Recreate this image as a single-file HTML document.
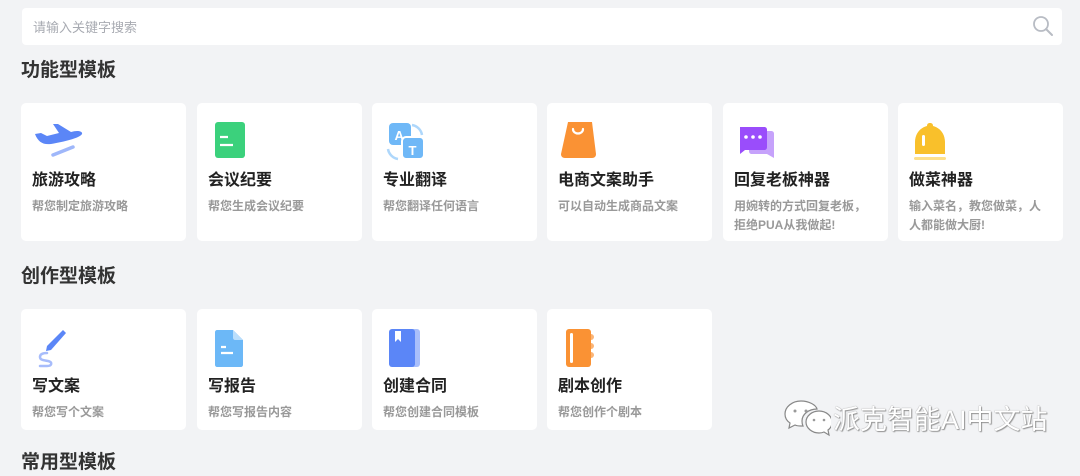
<!DOCTYPE html>
<html><head><meta charset="utf-8"><style>
*{margin:0;padding:0;box-sizing:border-box}
body{width:1080px;height:467px;overflow:hidden;background:#f2f3f5;font-family:"Liberation Sans","Noto Sans CJK SC",sans-serif;position:relative}
.search{position:absolute;left:22px;top:8px;width:1040px;height:37px;background:#fff;border-radius:4px}
.search span{position:absolute;left:11px;top:9px;font-size:13px;color:#a8abb2}
.search svg{position:absolute;right:8px;top:7px}
h2{position:absolute;left:21px;font-size:19px;font-weight:bold;color:#333;line-height:26px}
.card{position:absolute;width:165px;background:#fff;border-radius:5px}
.card svg{position:absolute;left:12px;top:18px}
.t{position:absolute;left:11px;top:67px;font-size:16px;font-weight:bold;color:#222;white-space:nowrap;line-height:22px}
.s{position:absolute;left:11px;top:94px;font-size:12px;font-weight:bold;color:#999;line-height:19px;width:139px}
.wm{position:absolute;top:398px;font-size:27px;color:#fff;text-shadow:0 0 1px #777,1px 1px 1px #999;white-space:nowrap}
</style></head><body>
<div class="search"><span>请输入关键字搜索</span>
<svg width="22" height="22" viewBox="0 0 22 22"><circle cx="9" cy="9" r="7" fill="none" stroke="#b8bcc4" stroke-width="1.8"/><path d="M14 14l6 6" stroke="#b8bcc4" stroke-width="2" stroke-linecap="round"/></svg></div>
<h2 style="top:58px">功能型模板</h2>
<h2 style="top:264px">创作型模板</h2>
<h2 style="top:450px">常用型模板</h2>

<div class="card" style="left:21px;top:103px;height:138px">
<svg width="50" height="40" viewBox="0 0 50 40"><path d="M2 13 L8 12 L14 15 L26 12 L20 3 L25 3 L38 11 C44 9 50 10 49 13 C47 17 30 21 18 23 C10 24 5 21 2 13Z" fill="#5b86f7"/><path d="M20 34 L40 26" stroke="#9fb7fa" stroke-width="3.5" stroke-linecap="round"/></svg>
<div class="t">旅游攻略</div><div class="s">帮您制定旅游攻略</div></div>

<div class="card" style="left:197px;top:103px;height:138px">
<svg width="40" height="40" viewBox="0 0 40 40"><rect x="21" y="15" width="14" height="22" rx="2" fill="#a8e6c0"/><rect x="6" y="1" width="30" height="36" rx="3" fill="#3bd17c"/><path d="M11 16h8M11 24h13" stroke="#fff" stroke-width="2.2"/></svg>
<div class="t">会议纪要</div><div class="s">帮您生成会议纪要</div></div>

<div class="card" style="left:372px;top:103px;height:138px">
<svg width="42" height="42" viewBox="0 0 42 42"><path d="M28 4 A12 12 0 0 1 38 14" stroke="#aed7fb" stroke-width="2.5" fill="none"/><path d="M4 28 A12 12 0 0 0 14 38" stroke="#aed7fb" stroke-width="2.5" fill="none"/><rect x="5" y="2" width="22" height="22" rx="4" fill="#6fb8f7"/><rect x="18" y="16" width="22" height="22" rx="4" fill="#6fb8f7" stroke="#fff" stroke-width="2"/><text x="10.5" y="19" font-size="13" font-weight="bold" fill="#fff" font-family="Liberation Sans">A</text><text x="24.5" y="34" font-size="13" font-weight="bold" fill="#fff" font-family="Liberation Sans">T</text></svg>
<div class="t">专业翻译</div><div class="s">帮您翻译任何语言</div></div>

<div class="card" style="left:547px;top:103px;height:138px">
<svg width="40" height="40" viewBox="0 0 40 40"><path d="M9 1h24l4 32c0 2-1 4-4 4H6c-3 0-4-2-4-4z" fill="#fa9234"/><path d="M14 8c0 6 10 6 10 0" stroke="#fff" stroke-width="2.2" fill="none" stroke-linecap="round"/></svg>
<div class="t">电商文案助手</div><div class="s">可以自动生成商品文案</div></div>

<div class="card" style="left:723px;top:103px;height:138px">
<svg width="42" height="42" viewBox="0 0 42 42"><path d="M14 10h22c2 0 3 1 3 3v24l-7-4H17c-2 0-3-1-3-3z" fill="#c6a2fb"/><path d="M5 6h24c2 0 3 1 3 3v17c0 2-1 3-3 3H10l-5 4z" fill="#9a4dfb"/><circle cx="11" cy="16" r="1.8" fill="#fff"/><circle cx="18" cy="16" r="1.8" fill="#fff"/><circle cx="25" cy="16" r="1.8" fill="#fff"/></svg>
<div class="t">回复老板神器</div><div class="s">用婉转的方式回复老板，<br>拒绝PUA从我做起!</div></div>

<div class="card" style="left:898px;top:103px;height:138px">
<svg width="40" height="42" viewBox="0 0 40 42"><path d="M20 2c2 0 3 1 3 3 8 2 12 9 12 16v12H5V21c0-7 4-14 12-16 0-2 1-3 3-3z" fill="#f9c02b"/><rect x="12" y="14" width="3" height="11" rx="1.5" fill="#fff"/><rect x="4" y="36" width="32" height="3" rx="1.5" fill="#fde08c"/></svg>
<div class="t">做菜神器</div><div class="s">输入菜名，教您做菜，人<br>人都能做大厨!</div></div>

<div class="card" style="left:21px;top:309px;height:121px">
<svg width="40" height="42" viewBox="0 0 40 42"><path d="M30 3l3 3-15 17-5 1 1-5z" fill="#5b86f7"/><path d="M14 26c-4 0-7 1-7 4s3 3 8 4 4 5-1 5H7" stroke="#a7bcfb" stroke-width="2.5" fill="none" stroke-linecap="round"/></svg>
<div class="t">写文案</div><div class="s">帮您写个文案</div></div>

<div class="card" style="left:197px;top:309px;height:121px">
<svg width="40" height="42" viewBox="0 0 40 42"><path d="M8 3h16l10 10v25c0 1-1 2-2 2H8c-1 0-2-1-2-2V5c0-1 1-2 2-2z" fill="#6cb8f7"/><path d="M24 3l10 10h-8c-1 0-2-1-2-2z" fill="#b9defc"/><path d="M12 20h5M12 26h12" stroke="#fff" stroke-width="2.2"/></svg>
<div class="t">写报告</div><div class="s">帮您写报告内容</div></div>

<div class="card" style="left:372px;top:309px;height:121px">
<svg width="40" height="42" viewBox="0 0 40 42"><rect x="10" y="2" width="26" height="38" rx="3" fill="#a9bffb"/><rect x="5" y="2" width="26" height="38" rx="3" fill="#5b86f7"/><path d="M11 4v11l3-3 3 3V4z" fill="#fff"/></svg>
<div class="t">创建合同</div><div class="s">帮您创建合同模板</div></div>

<div class="card" style="left:547px;top:309px;height:121px">
<svg width="40" height="42" viewBox="0 0 40 42"><circle cx="32" cy="10" r="3" fill="#fbb476"/><circle cx="32" cy="19" r="3" fill="#fbb476"/><circle cx="32" cy="28" r="3" fill="#fbb476"/><rect x="7" y="2" width="25" height="38" rx="3" fill="#fa9234"/><rect x="11" y="6" width="3" height="30" rx="1.5" fill="#fff"/></svg>
<div class="t">剧本创作</div><div class="s">帮您创作个剧本</div></div>

<svg style="position:absolute;left:783px;top:398px" width="48" height="40" viewBox="0 0 48 40"><g fill="#fff" stroke="#888" stroke-width="1.2"><path d="M18 3C9 3 2 9 2 16c0 4 2 7 5 9l-1 5 6-3c2 1 4 1 6 1 1 0 1 0 2 0-1-2-1-3-1-5 0-7 7-12 15-12C33 7 26 3 18 3z"/><path d="M36 13c-7 0-13 5-13 11s6 11 13 11c2 0 3 0 5-1l5 3-1-5c3-2 4-5 4-8 0-6-6-11-13-11z"/></g><circle cx="12" cy="13" r="1.5" fill="#999"/><circle cx="23" cy="13" r="1.5" fill="#999"/><circle cx="31" cy="22" r="1.3" fill="#999"/><circle cx="41" cy="22" r="1.3" fill="#999"/></svg>
<div class="wm" style="left:833px">派克智能AI中文站</div>
</body></html>
